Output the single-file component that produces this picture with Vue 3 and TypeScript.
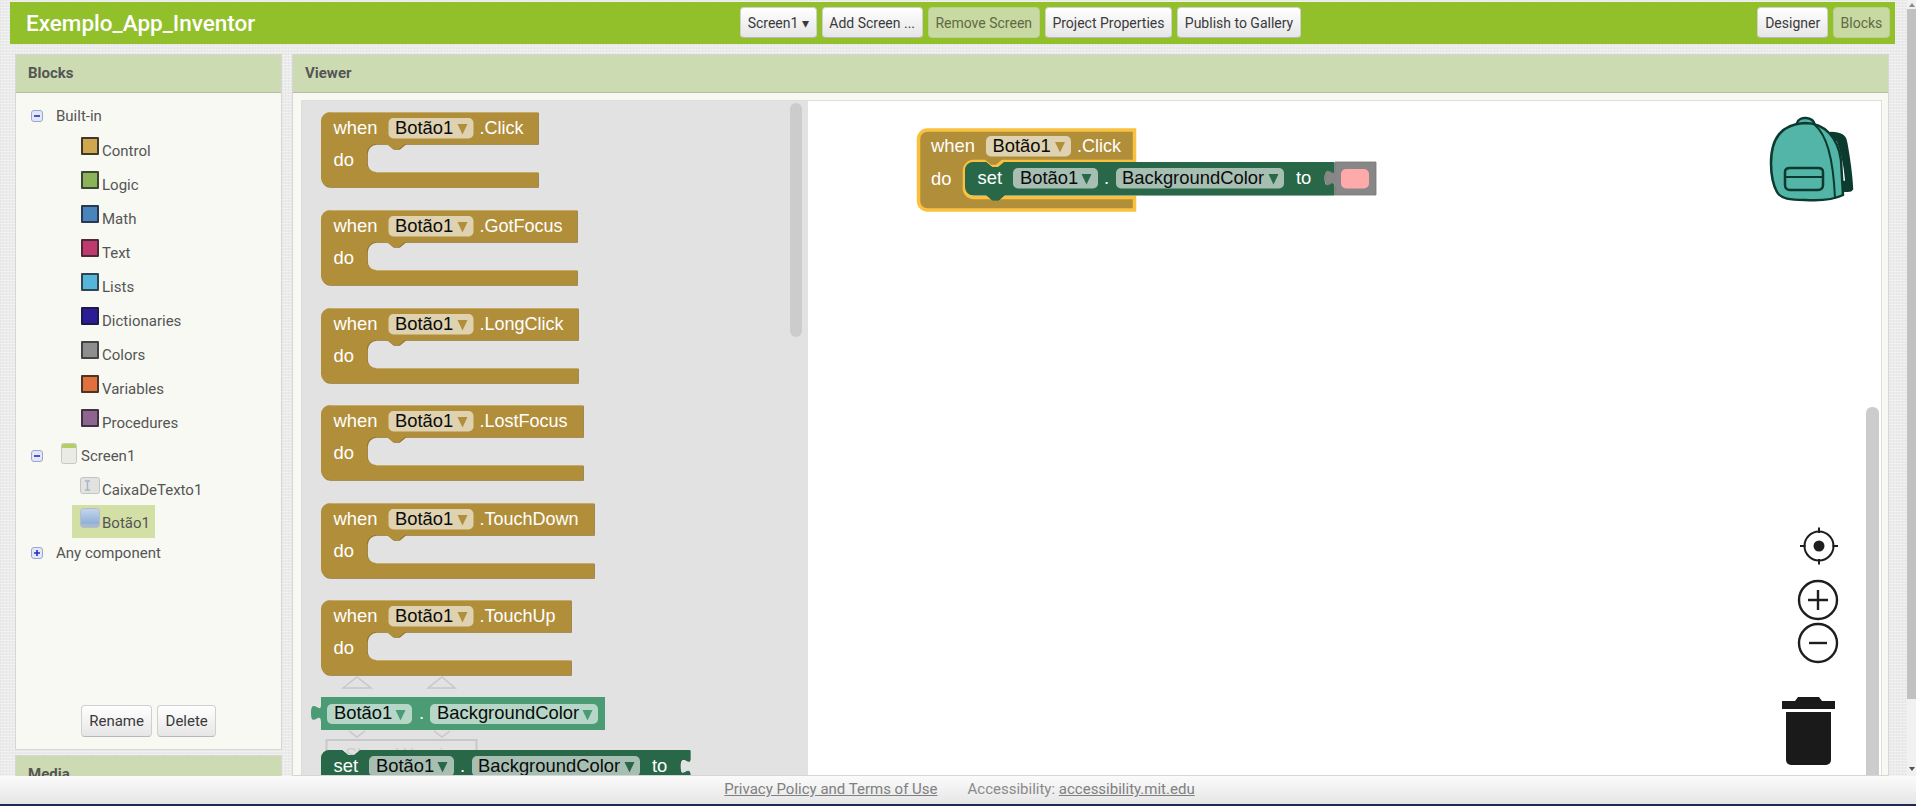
<script setup lang="ts">
interface EventBlock { x: number; y: number; w: number; label: string; gap: number; foot: number; head: number; selected: boolean }

const palette = [
  { name: 'Control', color: '#cfa74f', edge: '#3f3a2c' },
  { name: 'Logic', color: '#8cb35a', edge: '#3c4634' },
  { name: 'Math', color: '#4a84bd', edge: '#2a3a4e' },
  { name: 'Text', color: '#c13a6d', edge: '#4c2a3a' },
  { name: 'Lists', color: '#55b5db', edge: '#2f4552' },
  { name: 'Dictionaries', color: '#2b1d96', edge: '#1d1a4a' },
  { name: 'Colors', color: '#8e8e8e', edge: '#444444' },
  { name: 'Variables', color: '#e0703c', edge: '#4d3428' },
  { name: 'Procedures', color: '#8f6491', edge: '#3e3340' },
]

const topButtons = [
  { label: 'Screen1 ▾', off: false },
  { label: 'Add Screen ...', off: false },
  { label: 'Remove Screen', off: true },
  { label: 'Project Properties', off: false },
  { label: 'Publish to Gallery', off: false },
]

function ev(y: number, w: number, label: string): EventBlock {
  return { x: 321, y, w, label, head: 32, gap: 28, foot: 15, selected: false }
}

const events: EventBlock[] = [
  ev(112, 217, '.Click'),
  ev(210, 256, '.GotFocus'),
  ev(308, 257, '.LongClick'),
  ev(405, 262, '.LostFocus'),
  ev(503, 273, '.TouchDown'),
  ev(600, 250, '.TouchUp'),
  { x: 918.5, y: 130, w: 216, label: '.Click', head: 31.5, gap: 36, foot: 12.5, selected: true },
]

function eventPath(b: EventBlock): string {
  const { x, y, w, head, gap, foot } = b
  const r = 9
  const top = y + head
  const bottom = top + gap
  return [
    `M${x} ${y + r}a${r} ${r} 0 0 1 ${r} -${r}H${x + w}V${top}`,
    `H${x + 84}l-6 5h-6l-6 -5H${x + 55}a9 9 0 0 0 -9 9V${bottom - 9}a9 9 0 0 0 9 9`,
    `H${x + w}V${bottom + foot}H${x + r}a${r} ${r} 0 0 1 -${r} -${r}Z`,
  ].join('')
}

function lightPath(b: EventBlock): string {
  const bottom = b.y + b.head + b.gap + 0.5
  return `M${b.x + 9} ${b.y + 0.5}H${b.x + b.w}M${b.x + 55} ${bottom}H${b.x + b.w}`
}

const setPath =
  'M321 758a8 8 0 0 1 8 -8H342l6 5h6l6 -5H690V758c0,10 -10,-8 -10,8s10,-3 10,9V783' +
  'H360l-6 5h-6l-6 -5H329a8 8 0 0 1 -8 -8Z'

const getterPath = 'M321 697V705c0,10 -10,-8 -10,8s10,-3 10,9V730H605V697Z'
const colorPath = 'M1335 162V170c0,10 -10,-8 -10,8s10,-3 10,9V195H1376V162Z'

const setGroups = [
  { dx: 0, dy: 0 },
  { dx: 644, dy: -588 },
]
</script>

<template>
  <div class="page">
    <div class="upper">
      <div class="content">
        <header class="topbar">
          <div class="title">Exemplo_App_Inventor</div>
          <div class="btns">
            <button v-for="b in topButtons" :key="b.label" class="btn" :class="{ off: b.off }">{{ b.label }}</button>
          </div>
          <div class="btns right">
            <button class="btn">Designer</button>
            <button class="btn off">Blocks</button>
          </div>
        </header>

        <div class="panels">
          <aside class="side">
            <section class="panel blocks">
              <h2 class="phead">Blocks</h2>
              <div class="pbody sidebody">
                <div class="tree">
                  <div class="row group">
                    <svg class="toggle" viewBox="0 0 12 12"><rect x="0.5" y="0.5" width="11" height="11" rx="2.5" fill="#e4e8f6" stroke="#98a6d6" /><path d="M3 6H9" stroke="#2230c8" stroke-width="1.6" /></svg>
                    <span>Built-in</span>
                  </div>
                  <div v-for="p in palette" :key="p.name" class="row item">
                    <i class="swatch" :style="{ background: p.color, borderColor: p.edge }"></i>
                    <span>{{ p.name }}</span>
                  </div>
                  <div class="row screen">
                    <svg class="toggle" viewBox="0 0 12 12"><rect x="0.5" y="0.5" width="11" height="11" rx="2.5" fill="#e4e8f6" stroke="#98a6d6" /><path d="M3 6H9" stroke="#2230c8" stroke-width="1.6" /></svg>
                    <svg class="screenicon" width="16" height="21" viewBox="0 0 16 21">
                      <rect x="0.5" y="0.5" width="15" height="20" rx="2" fill="#ebebe6" stroke="#c8c8c4" />
                      <path d="M1 5V2.5A1.5 1.5 0 0 1 2.500 1H13.500A1.500 1.500 0 0 1 15 2.500V5Z" fill="#b4cf62" />
                    </svg>
                    <span>Screen1</span>
                  </div>
                  <div class="row item comp">
                    <svg class="cicon" width="20" height="17" viewBox="0 0 20 17">
                      <rect x="0.500" y="0.500" width="19" height="16" rx="2" fill="#e2e2e0" stroke="#c4c4c4" />
                      <path d="M5 4H10M5 13H10M7.500 4V13" stroke="#a9b4c6" stroke-width="1.400" fill="none" />
                    </svg>
                    <span>CaixaDeTexto1</span>
                  </div>
                  <div class="row item comp sel">
                    <svg class="cicon" width="20" height="20" viewBox="0 0 20 20">
                      <defs>
                        <linearGradient id="btnicon" x1="0" y1="0" x2="0" y2="1">
                          <stop offset="0" stop-color="#c5d6ec" />
                          <stop offset="0.8" stop-color="#8fb0d8" />
                          <stop offset="0.81" stop-color="#a9b9cf" />
                          <stop offset="1" stop-color="#a9b9cf" />
                        </linearGradient>
                      </defs>
                      <rect x="0.500" y="0.500" width="19" height="19" rx="3" fill="url(#btnicon)" stroke="#b4bdc6" />
                    </svg>
                    <span>Botão1</span>
                  </div>
                  <div class="row any">
                    <svg class="toggle" viewBox="0 0 12 12"><rect x="0.5" y="0.5" width="11" height="11" rx="2.5" fill="#e4e8f6" stroke="#98a6d6" /><path d="M3 6H9M6 3V9" stroke="#2230c8" stroke-width="1.6" /></svg>
                    <span>Any component</span>
                  </div>
                </div>
                <div class="actions">
                  <button class="btn small">Rename</button>
                  <button class="btn small">Delete</button>
                </div>
              </div>
            </section>
            <section class="panel media">
              <h2 class="phead">Media</h2>
            </section>
          </aside>

          <section class="panel viewer">
            <h2 class="phead">Viewer</h2>
            <div class="pbody viewbody">
              <svg class="workspace" viewBox="301 100 1581 676" width="1581" height="676">
                <rect x="301.500" y="100.500" width="1580" height="680" fill="none" stroke="#dddddd" />
                <rect x="302" y="101" width="506" height="675" fill="#e2e2e2" />
                <rect x="790" y="103" width="12" height="234" rx="6" fill="#cccccc" />
                <rect x="1866" y="407" width="13" height="380" rx="6" fill="#cccccc" />

                <!-- faded mutator hints behind the flyout blocks -->
                <path d="M343 688L357 677L371 688ZM428 688L442 677L455 688Z" fill="none" stroke="#c8c8c8" stroke-width="1.500" />
                <path d="M349 731L357 737L365 731M434 731L442 737L450 731" fill="none" stroke="#c8c8c8" stroke-width="1.500" />
                <rect x="326.500" y="740" width="150" height="30" fill="none" stroke="#c8c8c8" stroke-width="2" />
                <text x="345" y="761" class="hint">Show Warnings</text>

                <!-- event blocks -->
                <g v-for="b in events" :key="b.y">
                  <template v-if="b.selected">
                    <path :d="eventPath(b)" fill="#b18e3a" stroke="#f9c13f" stroke-width="3.500" />
                  </template>
                  <template v-else>
                    <path :d="eventPath(b)" fill="#8f7330" transform="translate(0.800 0.800)" />
                    <path :d="eventPath(b)" fill="#b18e3a" />
                    <path :d="lightPath(b)" fill="none" stroke="#c7ab68" />
                  </template>
                  <g :transform="`translate(${b.x} ${b.y})`">
                    <text x="12.500" y="22" class="white">when</text>
                    <rect x="67.500" y="6" width="85" height="20.500" rx="5" fill="#dfd2b0" />
                    <text x="74" y="22" class="dark">Botão1</text>
                    <polygon points="136.500,12 146.500,12 141.500,22.500" fill="#b18e3a" />
                    <text x="158.500" y="22" class="white label">{{ b.label }}</text>
                    <text x="12.500" :y="b.selected ? 55 : 54" class="white">do</text>
                  </g>
                </g>

                <!-- set blocks -->
                <g v-for="g in setGroups" :key="g.dx" :transform="`translate(${g.dx} ${g.dy})`">
                  <path :d="setPath" fill="#215539" transform="translate(0.600 0.600)" />
                  <path :d="setPath" fill="#286848" />
                  <text x="333.500" y="771.500" class="white">set</text>
                  <rect x="369" y="756" width="85" height="20.500" rx="5" fill="#a6bfb2" />
                  <text x="376" y="771.500" class="dark">Botão1</text>
                  <polygon points="437.500,762 447.500,762 442.500,772.500" fill="#286848" />
                  <text x="460" y="771.500" class="white">.</text>
                  <rect x="472" y="756" width="168" height="20.500" rx="5" fill="#a6bfb2" />
                  <text x="478" y="771.500" class="dark">BackgroundColor</text>
                  <polygon points="624.500,762 634.500,762 629.500,772.500" fill="#286848" />
                  <text x="652" y="771.500" class="white">to</text>
                </g>

                <!-- colour block -->
                <path :d="colorPath" fill="#878787" stroke="#777777" stroke-width="0.800" />
                <rect x="1341" y="169" width="28" height="19.500" rx="5" fill="#ffaaaa" />

                <!-- getter -->
                <path :d="getterPath" fill="#4b9b75" />
                <rect x="327" y="704" width="85" height="20" rx="5" fill="#b6d7c7" />
                <text x="334" y="719" class="dark">Botão1</text>
                <polygon points="395.500,710 405.500,710 400.500,720.500" fill="#4b9b75" />
                <text x="419" y="719" class="white">.</text>
                <rect x="430" y="704" width="168" height="20" rx="5" fill="#b6d7c7" />
                <text x="437" y="719" class="dark">BackgroundColor</text>
                <polygon points="582.500,710 592.500,710 587.500,720.500" fill="#4b9b75" />

                <!-- backpack -->
                <g stroke="#0c3a2e" stroke-width="2.500" stroke-linejoin="round" stroke-linecap="round">
                  <path d="M1831 133C1838 133 1845 134 1846 142C1849 158 1851 172 1852 189C1851 191 1846 191 1842 190Z" fill="#0c3a2e" />
                  <path d="M1836 142C1841 155 1843 168 1844 180" fill="none" stroke="#ffffff" stroke-width="2" />
                  <path d="M1797 123C1799 116 1813 116 1815 125" fill="#52b5a7" />
                  <path d="M1771 163C1771 135 1784 124 1805 123C1825 123 1838 138 1841 160L1843 195C1835 199 1820 201 1805 200C1790 200 1781 199 1777 192C1772 183 1771 175 1771 163Z" fill="#52b5a7" />
                  <path d="M1815 125C1826 135 1833 155 1835 198" fill="none" stroke-width="2" />
                  <path d="M1785 172C1785 169 1787 168 1790 168H1818C1821 168 1823 169 1823 172V185C1823 188 1821 190 1818 190H1790C1787 190 1785 188 1785 185Z" fill="#52b5a7" />
                  <path d="M1785 177H1823" fill="none" stroke-width="2" />
                </g>

                <!-- zoom controls -->
                <g fill="none" stroke="#1e1e1e">
                  <circle cx="1819" cy="546" r="14.500" stroke-width="2" />
                  <path d="M1819 527.500V533M1819 559V564.500M1800 546H1805.500M1832.500 546H1838" stroke-width="2" />
                  <circle cx="1818" cy="600" r="19" stroke-width="2.400" />
                  <path d="M1808 600H1828M1818 590V610" stroke-width="2.400" />
                  <circle cx="1818" cy="643" r="19" stroke-width="2.400" />
                  <path d="M1809 643H1827" stroke-width="2.400" />
                </g>
                <circle cx="1819" cy="546" r="5.500" fill="#1e1e1e" />

                <!-- trash -->
                <path d="M1782 701H1795L1798 697H1819L1822 701H1835V709H1782Z" fill="#1a1a1a" />
                <path d="M1786 712H1831V760A5 5 0 0 1 1826 765H1791A5 5 0 0 1 1786 760Z" fill="#1a1a1a" />
              </svg>
            </div>
          </section>
        </div>
      </div>
      <div class="pagebar">
        <i class="arrow up"></i>
        <div class="thumb"></div>
        <div class="rest"></div>
        <i class="arrow down"></i>
      </div>
    </div>

    <footer class="foot">
      <a class="link">Privacy Policy and Terms of Use</a>
      <span>Accessibility: <a class="link">accessibility.mit.edu</a></span>
    </footer>
  </div>
</template>

<style>
html,
body {
  margin: 0;
  height: 806px;
  overflow: hidden;
}
</style>

<style scoped>
.page {
  width: 1916px;
  height: 806px;
  display: flex;
  flex-direction: column;
  font-family: Roboto, "Liberation Sans", sans-serif;
  font-size: 15px;
  color: #555555;
  background-color: #ebebeb;
  background-image:
    repeating-linear-gradient(0deg, rgba(255, 255, 255, 0.35) 0 1px, transparent 1px 3px),
    repeating-linear-gradient(90deg, rgba(0, 0, 0, 0.025) 0 1px, transparent 1px 3px);
}
.upper {
  height: 776px;
  flex: none;
  display: flex;
  overflow: hidden;
}
.content {
  width: 1907px;
  flex: none;
  min-width: 0;
}
.topbar {
  margin: 2px 12px 0 10px;
  height: 42px;
  display: flex;
  align-items: flex-start;
  padding-top: 5px;
  box-sizing: border-box;
  background: #92c02a;
}
.title {
  width: 714px;
  padding-left: 16px;
  flex: none;
  color: #ffffff;
  font-size: 22.5px;
  font-weight: 500;
  line-height: 33px;
}
.btns {
  display: flex;
  gap: 5px;
}
.right {
  margin-left: auto;
  margin-right: 5px;
}
.btn {
  height: 31px;
  padding: 0 6.7px;
  box-sizing: border-box;
  font: 14px Roboto, "Liberation Sans", sans-serif;
  color: #3a3a3a;
  background: linear-gradient(#ffffff, #e6e6e6);
  border: 1px solid #d0d0d0;
  border-bottom-color: #b8b8b8;
  border-radius: 4px;
  white-space: nowrap;
}
.btn.off {
  color: #5e6a44;
  background: #c8d9a2;
  border-color: #bccd98;
}
.btn.small {
  height: 32px;
  padding: 0 7.300px;
  font-size: 15px;
}
.panels {
  display: flex;
  gap: 10px;
  margin: 10px 18px 0 15px;
  height: 722px;
}
.side {
  width: 267px;
  flex: none;
  display: flex;
  flex-direction: column;
  gap: 5px;
}
.panel {
  border: 1px solid #d6d6d6;
  box-sizing: border-box;
  background: #f8f9f3;
  display: flex;
  flex-direction: column;
}
.blocks {
  height: 696px;
  flex: none;
}
.media {
  flex: 1;
}
.viewer {
  flex: 1;
  min-width: 0;
}
.phead {
  margin: 0;
  height: 38px;
  flex: none;
  box-sizing: border-box;
  padding-left: 12px;
  font-size: 15px;
  font-weight: 700;
  line-height: 36px;
  color: #555555;
  background: #cddbb2;
  border-bottom: 1px solid #b6bba9;
}
.pbody {
  flex: 1;
  min-height: 0;
}
.sidebody {
  display: flex;
  flex-direction: column;
}
.tree {
  flex: 1;
  padding-top: 5px;
}
.row {
  display: flex;
  align-items: center;
  height: 34px;
  white-space: nowrap;
}
.group {
  height: 36px;
  padding-left: 15px;
}
.toggle {
  width: 12px;
  height: 12px;
  flex: none;
  margin-right: 13px;
}
.item {
  padding-left: 65px;
}
.swatch {
  width: 18px;
  height: 18px;
  box-sizing: border-box;
  flex: none;
  border: 2px solid;
  border-radius: 1px;
  margin: -10px 3px 0 0;
}
.screen {
  padding-left: 15px;
  margin-top: -1px;
}
.screenicon {
  flex: none;
  margin: -6px 4px 0 5px;
}
.comp .cicon {
  flex: none;
  margin: -10px 2px 0 -1px;
}
.sel {
  width: 83px;
  height: 33px;
  box-sizing: border-box;
  margin: -2px 0 0 56px;
  padding: 3px 0 0 9px;
  background: #d2e0a6;
}
.any {
  height: 30px;
  padding-left: 15px;
}
.actions {
  display: flex;
  justify-content: center;
  gap: 5px;
  padding-bottom: 12px;
}
.viewbody {
  padding: 7px 6px 0 8px;
  overflow: hidden;
}
.workspace {
  display: block;
  background: #ffffff;
}
.workspace text {
  font-family: "Liberation Sans", Arial, sans-serif;
  font-size: 18.4px;
}
.workspace text.label {
  font-size: 18px;
}
.white {
  fill: #ffffff;
}
.dark {
  fill: #0b0b0b;
}
.hint {
  fill: #cfcfcf;
}
.pagebar {
  flex: 1;
  display: flex;
  flex-direction: column;
  align-items: stretch;
  background: #f1f1f1;
}
.arrow {
  display: block;
  width: 0;
  height: 0;
  flex: none;
  margin: 3px auto 3px;
  border-left: 3.500px solid transparent;
  border-right: 3.500px solid transparent;
}
.arrow.up {
  border-bottom: 4px solid #8a8a8a;
  margin-top: 3px;
  margin-bottom: 2px;
}
.arrow.down {
  border-top: 4px solid #505050;
  margin-bottom: 5px;
}
.thumb {
  height: 690px;
  flex: none;
  background: #c1c1c1;
}
.rest {
  flex: 1;
}
.foot {
  height: 30px;
  flex: none;
  box-sizing: border-box;
  padding: 0 0 2px 3px;
  display: flex;
  align-items: center;
  justify-content: center;
  gap: 30px;
  font-size: 15px;
  color: #8a8a8a;
  background: linear-gradient(#fbfbfb, #e6e6e6);
  border-bottom: 2px solid #1f2a55;
}
.link {
  text-decoration: underline;
  color: #808080;
}
</style>
